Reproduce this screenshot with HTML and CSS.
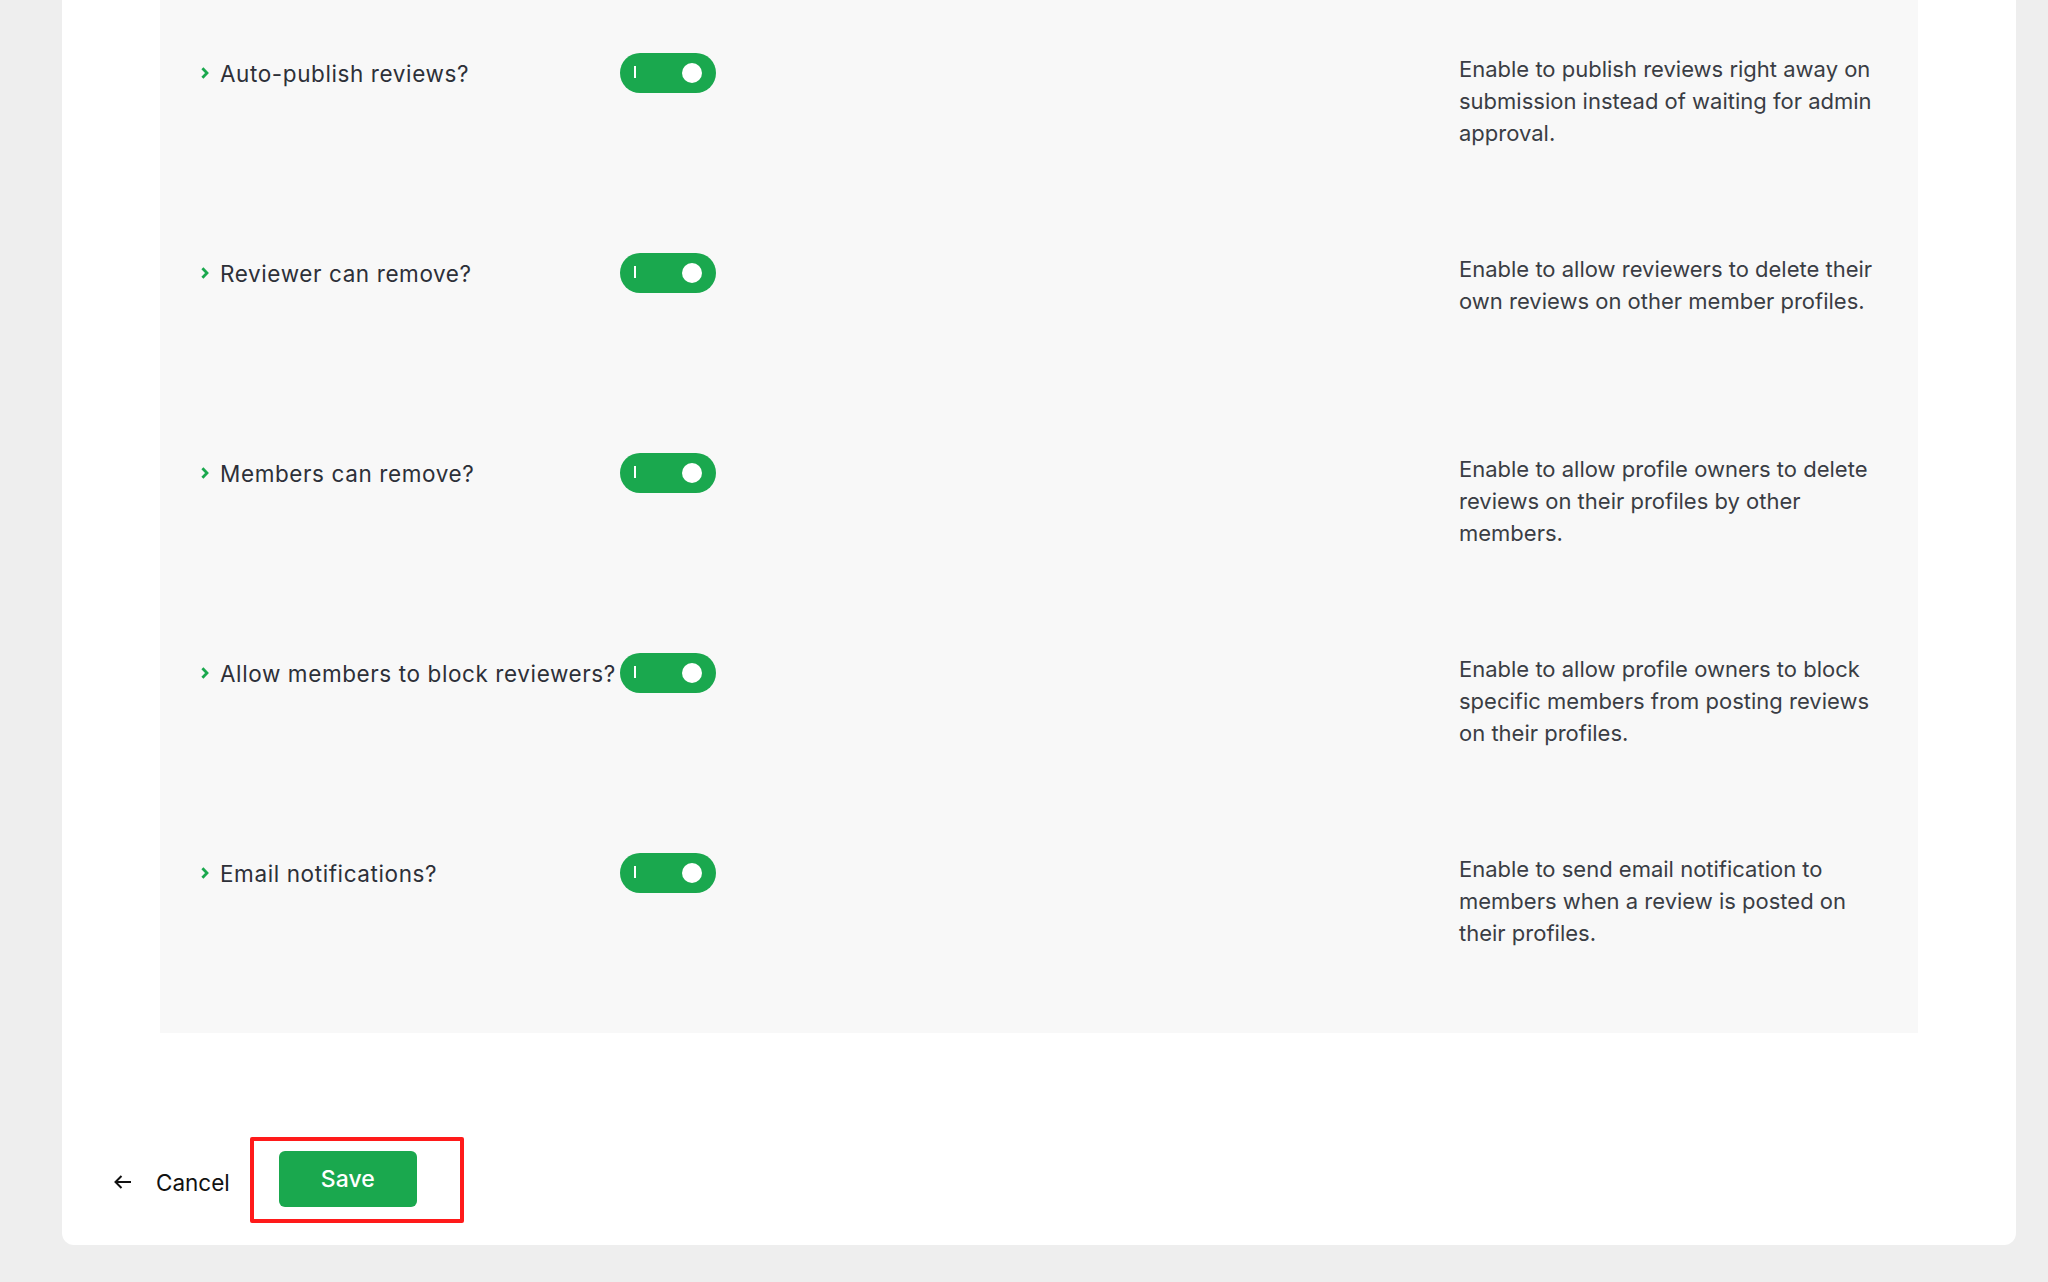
FILE: index.html
```html
<!DOCTYPE html>
<html lang="en">
  <head>
    <meta charset="UTF-8" />
    <title>Review Settings</title>
    <link rel="stylesheet" href="styles.css">
  </head>
  <body>
    <div class="page">
      <div class="card">
        <div class="settings-panel">
          <div class="setting-row">
            <div class="setting-label">
              <svg class="chevron" width="8" height="12" viewBox="0 0 8 12"><path d="M1.4 1.2L6 6l-4.6 4.8" fill="none" stroke="#1aa84e" stroke-width="2.8"/></svg>
              <span>Auto-publish reviews?</span>
            </div>
            <div class="toggle"><span class="toggle-mark"></span><span class="toggle-knob"></span></div>
            <p class="setting-desc">Enable to publish reviews right away on submission instead of waiting for admin approval.</p>
          </div>
          <div class="setting-row">
            <div class="setting-label">
              <svg class="chevron" width="8" height="12" viewBox="0 0 8 12"><path d="M1.4 1.2L6 6l-4.6 4.8" fill="none" stroke="#1aa84e" stroke-width="2.8"/></svg>
              <span>Reviewer can remove?</span>
            </div>
            <div class="toggle"><span class="toggle-mark"></span><span class="toggle-knob"></span></div>
            <p class="setting-desc">Enable to allow reviewers to delete their own reviews on other member profiles.</p>
          </div>
          <div class="setting-row">
            <div class="setting-label">
              <svg class="chevron" width="8" height="12" viewBox="0 0 8 12"><path d="M1.4 1.2L6 6l-4.6 4.8" fill="none" stroke="#1aa84e" stroke-width="2.8"/></svg>
              <span>Members can remove?</span>
            </div>
            <div class="toggle"><span class="toggle-mark"></span><span class="toggle-knob"></span></div>
            <p class="setting-desc">Enable to allow profile owners to delete reviews on their profiles by other members.</p>
          </div>
          <div class="setting-row">
            <div class="setting-label">
              <svg class="chevron" width="8" height="12" viewBox="0 0 8 12"><path d="M1.4 1.2L6 6l-4.6 4.8" fill="none" stroke="#1aa84e" stroke-width="2.8"/></svg>
              <span>Allow members to block reviewers?</span>
            </div>
            <div class="toggle"><span class="toggle-mark"></span><span class="toggle-knob"></span></div>
            <p class="setting-desc">Enable to allow profile owners to block specific members from posting reviews on their profiles.</p>
          </div>
          <div class="setting-row">
            <div class="setting-label">
              <svg class="chevron" width="8" height="12" viewBox="0 0 8 12"><path d="M1.4 1.2L6 6l-4.6 4.8" fill="none" stroke="#1aa84e" stroke-width="2.8"/></svg>
              <span>Email notifications?</span>
            </div>
            <div class="toggle"><span class="toggle-mark"></span><span class="toggle-knob"></span></div>
            <p class="setting-desc">Enable to send email notification to members when a review is posted on their profiles.</p>
          </div>
        </div>

        <div class="form-actions">
          <a class="cancel-link" href="#">
            <svg width="18" height="14" viewBox="0 0 18 14"><path d="M17 7H1.5M7.5 1L1.5 7l6 6" fill="none" stroke="#111" stroke-width="2"/></svg>
            <span>Cancel</span>
          </a>
          <div class="highlight-box">
            <button class="button-save">Save</button>
          </div>
        </div>
      </div>
    </div>
  </body>
</html>
```

FILE: styles.css
```css
body {
  margin: 0;
  padding: 0;
  font-family: 'Inter', 'Roboto', sans-serif;
  background-color: #eeeeee;
  color: #2d3038;
}
.page {
  padding: 0 32px 37px 62px;
}
.card {
  background-color: #ffffff;
  border-radius: 0 0 12px 12px;
  padding: 0 98px 22px 52px;
}
.settings-panel {
  margin-left: 46px;
  background-color: #f8f8f8;
  padding: 53px 33px 0 41px;
  display: flex;
  flex-direction: column;
  gap: 20px;
}
.setting-row {
  display: flex;
  align-items: flex-start;
  min-height: 180px;
}
.setting-label {
  width: 419px;
  display: flex;
  align-items: center;
  gap: 11px;
  height: 40px;
  font-size: 22.5px;
  letter-spacing: 0.6px;
  color: #2d3038;
  white-space: nowrap;
}
.chevron {
  flex-shrink: 0;
}
.toggle {
  position: relative;
  width: 96px;
  height: 40px;
  border-radius: 20px;
  background-color: #1aa84e;
  flex-shrink: 0;
}
.toggle-mark {
  position: absolute;
  left: 14px;
  top: 13px;
  width: 2px;
  height: 12px;
  background-color: #ffffff;
}
.toggle-knob {
  position: absolute;
  right: 14px;
  top: 10px;
  width: 20px;
  height: 20px;
  border-radius: 50%;
  background-color: #ffffff;
}
.setting-desc {
  margin: 0 0 0 auto;
  width: 426px;
  font-size: 22px;
  line-height: 32px;
  color: #3a3d44;
}
.form-actions {
  margin-top: 104px;
  display: flex;
  align-items: center;
  gap: 20px;
}
.cancel-link {
  display: flex;
  align-items: center;
  gap: 24px;
  color: #111111;
  text-decoration: none;
  font-size: 22.5px;
  padding-top: 4px;
}
.highlight-box {
  border: 4px solid #ff1a1a;
  border-radius: 2px;
  padding: 10px 43px 12px 25px;
}
.button-save {
  display: block;
  width: 138px;
  height: 56px;
  border: none;
  border-radius: 6px;
  background-color: #1aa84e;
  color: #ffffff;
  font-family: 'Inter', 'Roboto', sans-serif;
  font-size: 23px;
  font-weight: 500;
  cursor: pointer;
}
```
